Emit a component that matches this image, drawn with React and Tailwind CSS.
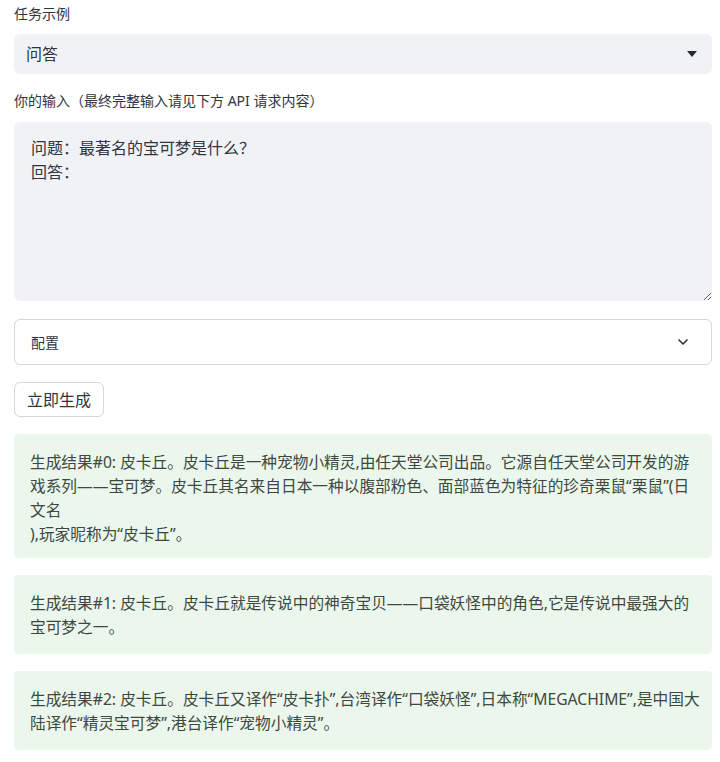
import React from 'react';
import { ChevronDown } from 'lucide-react';

const results = [
    [
        '生成结果#0: 皮卡丘。皮卡丘是一种宠物小精灵,由任天堂公司出品。它源自任天堂公司开发的游',
        '戏系列——宝可梦。皮卡丘其名来自日本一种以腹部粉色、面部蓝色为特征的珍奇栗鼠“栗鼠”(日',
        '文名',
        '),玩家昵称为“皮卡丘”。'
    ],
    [
        '生成结果#1: 皮卡丘。皮卡丘就是传说中的神奇宝贝——口袋妖怪中的角色,它是传说中最强大的',
        '宝可梦之一。'
    ],
    [
        '生成结果#2: 皮卡丘。皮卡丘又译作“皮卡扑”,台湾译作“口袋妖怪”,日本称“MEGACHIME”,是中国大',
        '陆译作“精灵宝可梦”,港台译作“宠物小精灵”。'
    ]
];

const App = () => {
    return (
        <div
            className="min-h-[762px] bg-white pl-[14px] pr-[8px] text-[#31333f]"
            style={{ fontFamily: '"Noto Sans", "Noto Sans CJK SC", sans-serif' }}
        >
            {/* task example select */}
            <div className="pt-[4px] text-[14px] leading-[20px] mb-[10px]">任务示例</div>
            <div className="h-[40px] bg-[#f0f2f6] rounded-[6px] flex items-center justify-between pl-[12px] pr-[15px]">
                <span className="text-[16px]">问答</span>
                <svg width="10" height="6" viewBox="0 0 10 6">
                    <path d="M0 0 L10 0 L5 6 Z" fill="#262730" />
                </svg>
            </div>

            {/* input */}
            <div className="mt-[17px] mb-[11px] text-[14px] leading-[20px]">
                你的输入（最终完整输入请见下方 API 请求内容）
            </div>
            <textarea
                className="block w-full h-[179px] bg-[#f0f2f6] rounded-[6px] px-[17px] py-[14px] text-[16px] leading-[24px] text-[#31333f] outline-none"
                defaultValue={'问题：最著名的宝可梦是什么？\n回答：'}
            />

            {/* config expander */}
            <div className="mt-[18px] h-[46px] border border-[#d6d6d9] rounded-[6px] flex items-center justify-between pl-[16px] pr-[20px]">
                <span className="text-[14px]">配置</span>
                <ChevronDown size={16} strokeWidth={2.5} className="text-[#31333f]" />
            </div>

            <button className="mt-[17px] h-[35px] px-[12px] border border-[#d6d6d9] rounded-[6px] bg-white text-[16px] flex items-center">
                立即生成
            </button>

            {/* results */}
            <div className="mt-[17px] flex flex-col gap-[17px] pb-[12px]">
                {results.map((lines, i) => (
                    <div
                        key={i}
                        className={
                            'bg-[#ebf7ed] rounded-[4px] px-[16px] pt-[16px] text-[15.7px] leading-[24px] text-[#3d4840] whitespace-nowrap ' +
                            (i === 0 ? 'pb-[12px]' : 'pb-[15px]')
                        }
                    >
                        {lines.map((line, j) => (
                            <div key={j}>{line}</div>
                        ))}
                    </div>
                ))}
            </div>
        </div>
    );
};

export default App;
